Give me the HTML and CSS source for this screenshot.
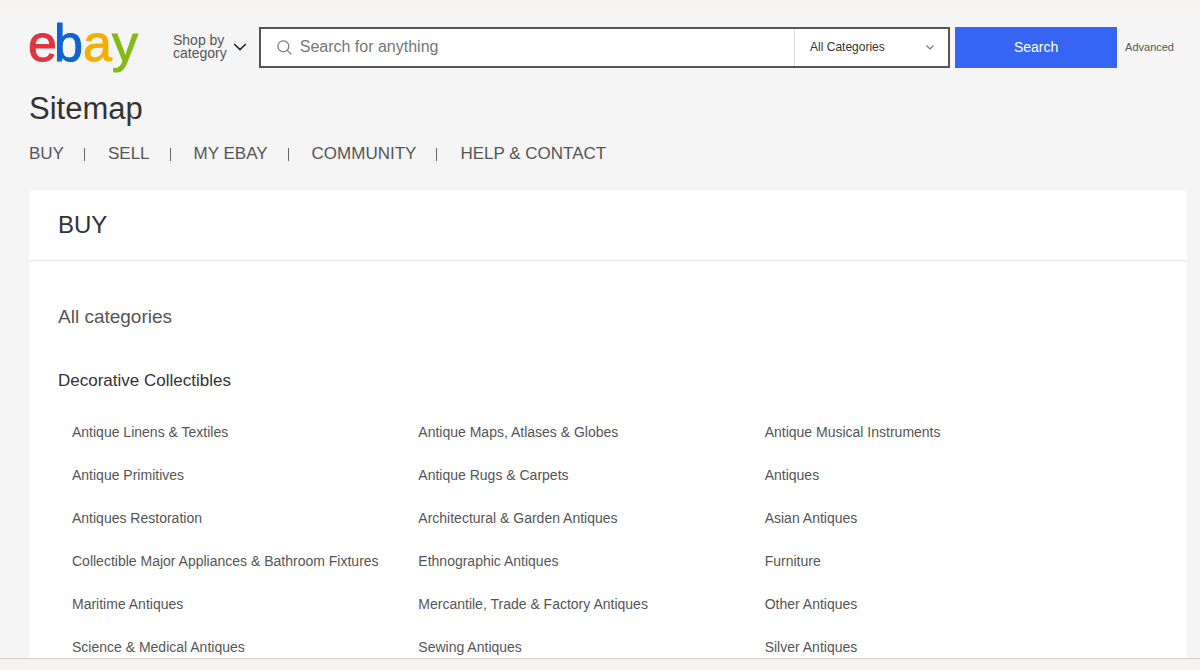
FILE: index.html
```html
<!DOCTYPE html>
<html lang="en">
<head>
    <meta charset="UTF-8">
    <meta name="viewport" content="width=device-width, initial-scale=1.0">
    <title>Sitemap | eBay</title>
    <link rel="stylesheet" href="styles.css">
</head>
<body>
    <div class="top-strip"></div>

    <div class="page">
        <!-- Header -->
        <header class="header">
            <a class="logo" href="#" aria-label="eBay home">
                <svg width="114" height="50" viewBox="0 0 114 50">
                    <text class="logo-text" y="39"><tspan class="logo-e" x="-1">e</tspan><tspan class="logo-b" x="25">b</tspan><tspan class="logo-a" x="54">a</tspan><tspan class="logo-y" x="83">y</tspan></text>
                </svg>
            </a>
            <button class="shop-by" type="button">
                <span>Shop by<br>category</span>
                <svg width="14" height="8" viewBox="0 0 14 8" fill="none" stroke="#222" stroke-width="1.6">
                    <path d="M1.2 1L7 6.6 12.8 1"/>
                </svg>
            </button>
            <form class="search">
                <div class="search-box">
                    <svg class="search-icon" width="15" height="15" viewBox="0 0 15 15" fill="none" stroke="#777" stroke-width="1.2">
                        <circle cx="6.3" cy="6.3" r="5.5"/>
                        <path d="M10.3 10.3l4 4"/>
                    </svg>
                    <input class="search-input" type="text" placeholder="Search for anything" aria-label="Search for anything">
                    <div class="category">
                        <select class="category-select" aria-label="Select a category for search">
                            <option>All Categories</option>
                        </select>
                        <svg class="category-arrow" width="8" height="5" viewBox="0 0 8 5" fill="none" stroke="#777" stroke-width="1.2">
                            <path d="M.5.5L4 4 7.5.5"/>
                        </svg>
                    </div>
                </div>
                <button class="search-btn" type="submit">Search</button>
            </form>
            <a class="advanced" href="#">Advanced</a>
        </header>

        <h1 class="title">Sitemap</h1>

        <nav class="tabs">
            <a href="#buy">BUY</a>
            <a href="#sell">SELL</a>
            <a href="#my-ebay">MY EBAY</a>
            <a href="#community">COMMUNITY</a>
            <a href="#help">HELP &amp; CONTACT</a>
        </nav>

        <!-- Buy section -->
        <main class="card" id="buy">
            <h2 class="card-title">BUY</h2>
            <div class="card-body">
                <h3 class="group-title">All categories</h3>
                <h4 class="list-title">Decorative Collectibles</h4>
                <ul class="links">
                    <li><a href="#">Antique Linens &amp; Textiles</a></li>
                    <li><a href="#">Antique Maps, Atlases &amp; Globes</a></li>
                    <li><a href="#">Antique Musical Instruments</a></li>
                    <li><a href="#">Antique Primitives</a></li>
                    <li><a href="#">Antique Rugs &amp; Carpets</a></li>
                    <li><a href="#">Antiques</a></li>
                    <li><a href="#">Antiques Restoration</a></li>
                    <li><a href="#">Architectural &amp; Garden Antiques</a></li>
                    <li><a href="#">Asian Antiques</a></li>
                    <li><a href="#">Collectible Major Appliances &amp; Bathroom Fixtures</a></li>
                    <li><a href="#">Ethnographic Antiques</a></li>
                    <li><a href="#">Furniture</a></li>
                    <li><a href="#">Maritime Antiques</a></li>
                    <li><a href="#">Mercantile, Trade &amp; Factory Antiques</a></li>
                    <li><a href="#">Other Antiques</a></li>
                    <li><a href="#">Science &amp; Medical Antiques</a></li>
                    <li><a href="#">Sewing Antiques</a></li>
                    <li><a href="#">Silver Antiques</a></li>
                </ul>
            </div>
        </main>
    </div>

    <div class="bottom-strip"></div>
</body>
</html>
```

FILE: styles.css
```css
* {
    box-sizing: border-box;
}

body {
    display: flex;
    flex-direction: column;
    height: 100vh;
    margin: 0;
    font-family: "Liberation Sans", Arial, sans-serif;
    background-color: #f5f5f5;
    color: #333;
}

a {
    color: inherit;
    text-decoration: none;
}

a:hover {
    text-decoration: underline;
}

.top-strip {
    flex: none;
    height: 12px;
    background-color: #f4f3f0;
}

.bottom-strip {
    flex: none;
    height: 12px;
    border-top: 1px solid #d0cecd;
    background-color: #f4f3f0;
}

.page {
    flex: 1;
    min-height: 0;
    overflow: hidden;
    padding: 8px 13px 0 29px;
}

/* Header */
.header {
    display: flex;
    align-items: center;
    height: 54px;
    padding-right: 13px;
}

.logo {
    flex: none;
    height: 50px;
}

.logo svg {
    display: block;
    overflow: visible;
}

.logo-text {
    font-size: 52px;
    stroke-width: 1;
}

.logo-e {
    fill: #e0343f;
    stroke: #e0343f;
}

.logo-b {
    fill: #0f64d2;
    stroke: #0f64d2;
}

.logo-a {
    fill: #f5af02;
    stroke: #f5af02;
}

.logo-y {
    fill: #86b817;
    stroke: #86b817;
}

.shop-by {
    display: flex;
    align-items: center;
    gap: 6px;
    margin-left: 30px;
    padding: 0;
    border: none;
    background: none;
    font-family: inherit;
    font-size: 14px;
    line-height: 13px;
    text-align: left;
    color: #555;
    cursor: pointer;
}

.search {
    display: flex;
    flex: 1;
    gap: 5px;
    margin: 0 8px 0 12px;
}

.search-box {
    display: flex;
    flex: 1;
    align-items: center;
    height: 41px;
    padding-left: 16px;
    border: 2px solid #555;
    background-color: #fff;
}

.search-icon {
    flex: none;
}

.search-input {
    flex: 1;
    min-width: 0;
    padding: 0 8px;
    border: none;
    outline: none;
    background: none;
    font-family: inherit;
    font-size: 16px;
    color: #333;
}

.search-input::placeholder {
    color: #767676;
}

.category {
    position: relative;
    width: 154px;
    height: 100%;
    border-left: 1px solid #ddd;
}

.category-select {
    width: 100%;
    height: 100%;
    padding: 0 15px;
    border: none;
    appearance: none;
    background: none;
    font-family: inherit;
    font-size: 12px;
    color: #333;
}

.category-arrow {
    position: absolute;
    top: 16px;
    right: 14px;
    pointer-events: none;
}

.search-btn {
    width: 162px;
    height: 41px;
    border: none;
    background-color: #3665f3;
    font-family: inherit;
    font-size: 14px;
    color: #fff;
    cursor: pointer;
}

.advanced {
    font-size: 11px;
    color: #555;
}

/* Title and tabs */
.title {
    margin: 17px 0 0;
    font-size: 31px;
    font-weight: normal;
    line-height: 36px;
}

.tabs {
    display: flex;
    align-items: center;
    height: 24px;
    margin-top: 15px;
    font-size: 17px;
    color: #555;
}

.tabs a + a::before {
    content: "";
    display: inline-block;
    width: 1px;
    height: 13px;
    margin: 0 23px 0 20px;
    background-color: #666;
    vertical-align: -2px;
}

/* Card */
.card {
    margin-top: 24px;
    border-radius: 3px;
    background-color: #fff;
}

.card-title {
    margin: 0;
    padding: 0 29px;
    border-bottom: 1px solid #e5e5e5;
    font-size: 24px;
    font-weight: normal;
    line-height: 70px;
}

.card-body {
    padding: 44px 29px;
}

.group-title {
    margin: 0;
    font-size: 19px;
    font-weight: normal;
    line-height: 24px;
    color: #555;
}

.list-title {
    margin: 40px 0 0;
    font-size: 17px;
    font-weight: normal;
    line-height: 24px;
}

.links {
    display: grid;
    grid-template-columns: repeat(3, 1fr);
    margin: 18px 0 0;
    padding: 0 47px 0 14px;
    list-style: none;
    font-size: 14px;
    line-height: 43px;
    color: #555;
}
```
